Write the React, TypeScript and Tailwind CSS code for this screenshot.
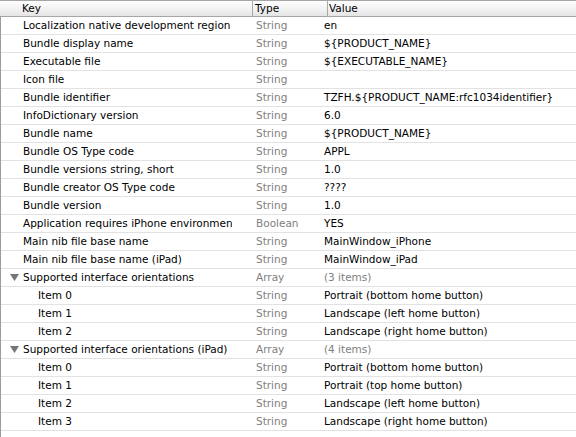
import React from 'react';

type Row = {
  key: string;
  type: string;
  value: string;
  depth?: number;
  group?: boolean;
};

const rows: Row[] = [
  { key: 'Localization native development region', type: 'String', value: 'en' },
  { key: 'Bundle display name', type: 'String', value: '${PRODUCT_NAME}' },
  { key: 'Executable file', type: 'String', value: '${EXECUTABLE_NAME}' },
  { key: 'Icon file', type: 'String', value: '' },
  { key: 'Bundle identifier', type: 'String', value: 'TZFH.${PRODUCT_NAME:rfc1034identifier}' },
  { key: 'InfoDictionary version', type: 'String', value: '6.0' },
  { key: 'Bundle name', type: 'String', value: '${PRODUCT_NAME}' },
  { key: 'Bundle OS Type code', type: 'String', value: 'APPL' },
  { key: 'Bundle versions string, short', type: 'String', value: '1.0' },
  { key: 'Bundle creator OS Type code', type: 'String', value: '????' },
  { key: 'Bundle version', type: 'String', value: '1.0' },
  { key: 'Application requires iPhone environment', type: 'Boolean', value: 'YES' },
  { key: 'Main nib file base name', type: 'String', value: 'MainWindow_iPhone' },
  { key: 'Main nib file base name (iPad)', type: 'String', value: 'MainWindow_iPad' },
  { key: 'Supported interface orientations', type: 'Array', value: '(3 items)', group: true },
  { key: 'Item 0', type: 'String', value: 'Portrait (bottom home button)', depth: 1 },
  { key: 'Item 1', type: 'String', value: 'Landscape (left home button)', depth: 1 },
  { key: 'Item 2', type: 'String', value: 'Landscape (right home button)', depth: 1 },
  { key: 'Supported interface orientations (iPad)', type: 'Array', value: '(4 items)', group: true },
  { key: 'Item 0', type: 'String', value: 'Portrait (bottom home button)', depth: 1 },
  { key: 'Item 1', type: 'String', value: 'Portrait (top home button)', depth: 1 },
  { key: 'Item 2', type: 'String', value: 'Landscape (left home button)', depth: 1 },
  { key: 'Item 3', type: 'String', value: 'Landscape (right home button)', depth: 1 },
];

const Disclosure = () => (
  <svg width="9" height="7" viewBox="0 0 9 7" className="absolute left-[9px] top-[5px]">
    <polygon points="0,0 9,0 4.5,7" fill="#767676" />
  </svg>
);

const PlistRow = ({ row }: { row: Row }) => (
  <div className="relative flex h-[18px] border-b border-[#e2e2e2] leading-[17px]">
    {row.group && <Disclosure />}
    <div
      className={`w-[231px] shrink-0 overflow-hidden whitespace-nowrap text-black ${
        row.depth ? 'pl-[37px]' : 'pl-[22px]'
      }`}
    >
      {row.key}
    </div>
    <div className="ml-[24px] w-[68px] shrink-0 whitespace-nowrap text-[#808080]">{row.type}</div>
    <div className={`whitespace-nowrap ${row.group ? 'text-[#808080]' : 'text-black'}`}>{row.value}</div>
  </div>
);

export default function App() {
  return (
    <div className="flex h-[437px] w-[576px] flex-col overflow-hidden bg-white font-['DejaVu_Sans',sans-serif] text-[10.5px]">
      <div className="flex h-[17px] shrink-0 border-y border-[#a6a6a6] bg-linear-to-b from-[#fdfdfd] via-[#f3f3f3] to-[#e4e4e4] leading-[15px] text-black">
        <div className="w-[252px] shrink-0 pl-[22px]">Key</div>
        <div className="w-[75px] shrink-0 border-l border-[#a9a9a9] pl-[2px]">Type</div>
        <div className="flex-1 border-l border-[#a9a9a9] pl-[1px]">Value</div>
      </div>
      <div className="flex-1 border-l border-[#9c9c9c]">
        {rows.map((row, i) => (
          <PlistRow key={i} row={row} />
        ))}
      </div>
    </div>
  );
}
